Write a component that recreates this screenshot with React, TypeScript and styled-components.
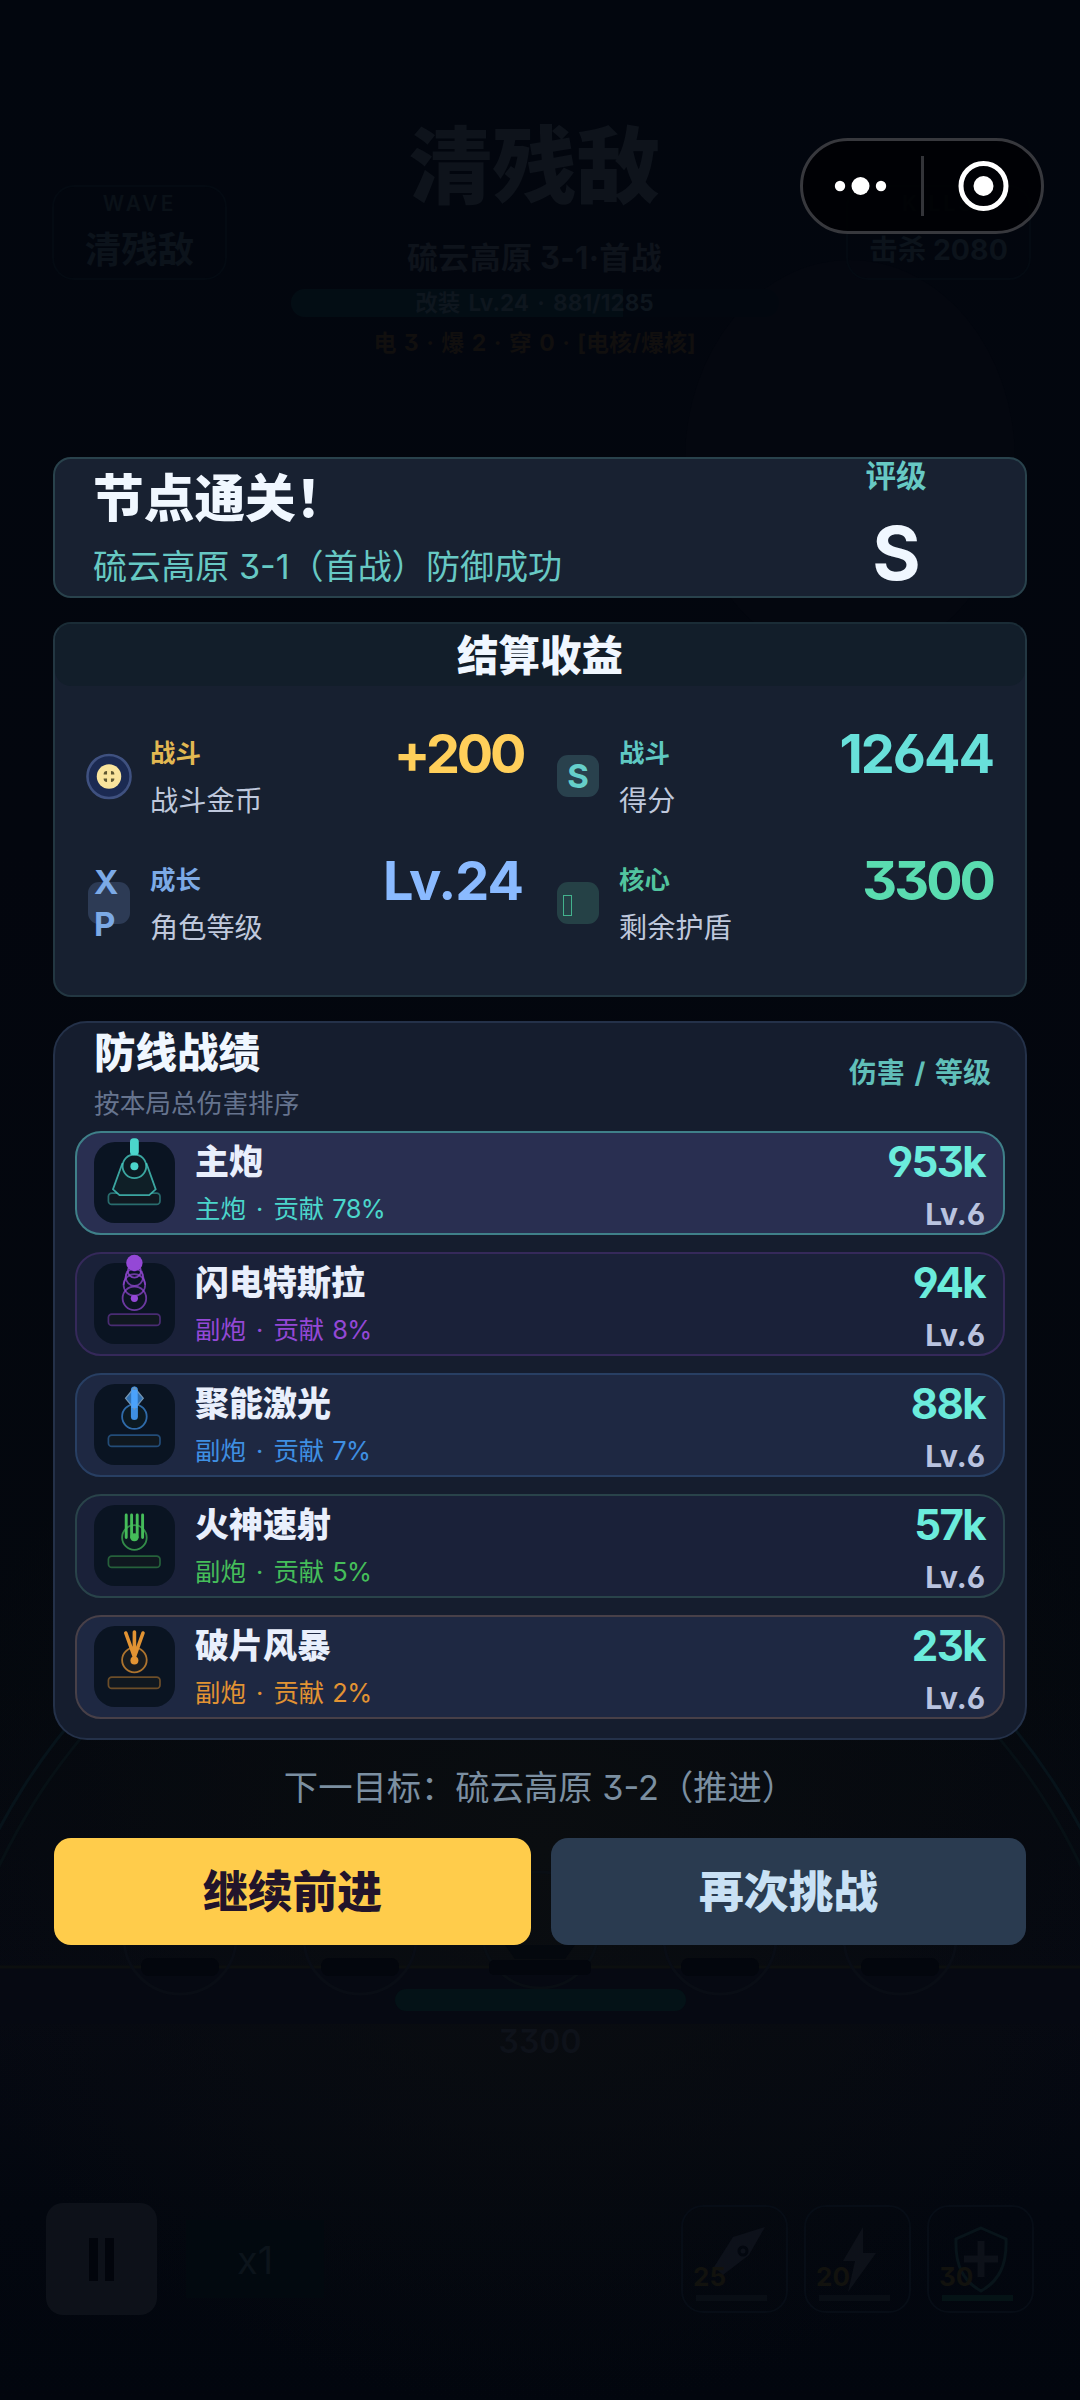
import React from "react";
import styled, { createGlobalStyle } from "styled-components";

const Global = createGlobalStyle`
  *, *::before, *::after { box-sizing: border-box; }
  body {
    margin: 0;
    background: #03070f;
    font-family: Inter, "Noto Sans CJK SC", sans-serif;
    font-feature-settings: "cv03", "cv04", "cv09";
  }
`;

const Page = styled.div`
  position: relative;
  width: 1080px;
  height: 2400px;
  overflow: hidden;
  background:
    radial-gradient(ellipse 620px 560px at 50% 1850px, #0a0d10 0%, rgba(10, 13, 16, 0) 100%),
    linear-gradient(180deg, #02060e 0%, #03060e 35%, #04080e 70%, #060912 84%, #03070f 92%, #02060e 100%);
`;

/* Dimmed battle scene under the result sheet */
const Scene = styled.div`
  position: absolute;
  inset: 0;
  display: flex;
  flex-direction: column;
  white-space: nowrap;
`;

const Field = styled.svg`
  position: absolute;
  inset: 0;
`;

const Hud = styled.div`
  position: relative;
  height: 370px;
  padding: 112px 49px 0 52px;
  display: grid;
  grid-template-columns: 175px 1fr 185px;
  align-items: start;
`;

const HudCard = styled.div`
  margin-top: 73px;
  height: 95px;
  border: 2px solid #040a12;
  border-radius: 22px;
  display: flex;
  flex-direction: column;
  align-items: center;
  color: #0c131b;
`;

const HudCaption = styled.span`
  font-size: 21px;
  line-height: 34px;
  font-weight: 600;
  letter-spacing: 3px;
  color: #0a1118;
`;

const HudValue = styled.span<{ $size: number }>`
  margin-top: 9px;
  font-size: ${(p) => p.$size}px;
  line-height: 40px;
  font-weight: 700;
`;

const HudCenter = styled.div`
  display: flex;
  flex-direction: column;
  align-items: center;
  padding-right: 4px;
  color: #0e131b;
  font-weight: 700;
`;

const WaveTitle = styled.div`
  font-size: 84px;
  line-height: 110px;
  font-weight: 900;
`;

const WaveSub = styled.div`
  margin-top: 16px;
  font-size: 31px;
  line-height: 40px;
  letter-spacing: 0.3px;
`;

const XpBar = styled.div`
  margin-top: 11px;
  width: 488px;
  height: 28px;
  border-radius: 14px;
  text-align: center;
  font-size: 22.5px;
  line-height: 28px;
  word-spacing: 3px;
  color: #0e161e;
  background: linear-gradient(90deg, #030d14 0 68%, #02070f 68%);
`;

const Cores = styled.div`
  margin-top: 10px;
  font-size: 23px;
  line-height: 32px;
  word-spacing: 2px;
  color: #110f0e;
`;

const CoreHp = styled.div`
  position: relative;
  margin: 1619px auto 0;
  display: flex;
  flex-direction: column;
  align-items: center;
  color: #0e121a;
  font-size: 32px;
  font-weight: 600;
  line-height: 40px;
`;

const HpBar = styled.div`
  width: 291px;
  height: 22px;
  margin-bottom: 11px;
  border-radius: 11px;
  background: #041217;
`;

const Controls = styled.div`
  position: relative;
  margin-top: 141px;
  padding: 0 46px;
  display: flex;
  align-items: center;
`;

const Pause = styled.div`
  width: 111px;
  height: 112px;
  border-radius: 17px;
  background: #0d1119;
  display: flex;
  align-items: center;
  justify-content: center;
  gap: 7px;
`;

const PauseBar = styled.i`
  width: 9px;
  height: 43px;
  background: #02050c;
`;

const Speed = styled.div`
  margin-left: 29px;
  width: 138px;
  height: 78px;
  line-height: 80px;
  text-align: center;
  font-size: 38px;
  color: #0c141b;
  background: #02090f;
`;

const Skills = styled.div`
  margin-left: auto;
  display: flex;
  gap: 16px;
`;

const Skill = styled.div`
  position: relative;
  width: 107px;
  height: 108px;
  border: 2px solid #070d16;
  border-radius: 22px;
`;

const SkillArt = styled.svg`
  position: absolute;
  left: -2px;
  top: -2px;
`;

const SkillCost = styled.span`
  position: absolute;
  left: 10px;
  bottom: 20px;
  font-size: 26px;
  line-height: 28px;
  font-weight: 700;
  color: #12120e;
`;

/* Host app capsule */
const Capsule = styled.div`
  position: absolute;
  left: 800px;
  top: 138px;
  width: 244px;
  height: 96px;
  border: 3px solid #37383d;
  border-radius: 48px;
  background: rgba(0, 1, 4, 0.85);
  display: flex;
  align-items: center;
`;

/* Result sheet */
const Sheet = styled.main`
  position: relative;
  padding: 457px 53px 0;
  display: flex;
  flex-direction: column;
  white-space: nowrap;
`;

const Banner = styled.section`
  height: 141px;
  border: 2px solid #29424c;
  border-radius: 18px;
  background: #182131;
  padding: 0 74px 0 38px;
  display: flex;
  justify-content: space-between;
`;

const BannerTitle = styled.h1`
  margin: 10px 0 18px;
  font-size: 50.7px;
  line-height: 60px;
  font-weight: 900;
  color: #f0f7ff;
`;

const BannerSub = styled.div`
  font-size: 34.1px;
  line-height: 40px;
  color: #67c9c4;
`;

const Rating = styled.div`
  width: 110px;
  text-align: center;
`;

const RatingLabel = styled.div`
  margin-top: -1px;
  font-size: 30.5px;
  line-height: 36px;
  font-weight: 700;
  color: #67c9c4;
`;

const RatingGrade = styled.div`
  margin-top: 19px;
  font-size: 74px;
  line-height: 80px;
  font-weight: 750;
  letter-spacing: -1px;
  color: #f0f7ff;
`;

const Rewards = styled.section`
  margin-top: 24px;
  height: 375px;
  border: 2px solid #233742;
  border-top-color: #1a2c36;
  border-radius: 18px;
  background: #172030;
`;

const RewardsHead = styled.h2`
  margin: 0;
  height: 62px;
  padding-top: 7px;
  border-radius: 16px;
  background: #121e2a;
  text-align: center;
  font-size: 41.5px;
  line-height: 50px;
  font-weight: 900;
  color: #f0f7ff;
`;

const RewardGrid = styled.div`
  padding: 42px 32px 0 31px;
  display: grid;
  grid-template-columns: 437px 438px;
  grid-auto-rows: 97px;
  gap: 30px 32px;
`;

const Reward = styled.div`
  display: flex;
  align-items: flex-start;
`;

const IconSlot = styled.div`
  width: 46px;
  height: 46px;
  margin: 25px 18px 0 0;
  display: flex;
  align-items: center;
  justify-content: center;
`;

const Badge = styled.div<{ $bg: string; $fg: string; $left?: boolean }>`
  width: 42px;
  height: 42px;
  padding: ${(p) => (p.$left ? "0 6px" : "0")};
  border-radius: 11px;
  background: ${(p) => p.$bg};
  color: ${(p) => p.$fg};
  display: flex;
  align-items: center;
  justify-content: ${(p) => (p.$left ? "flex-start" : "center")};
  font-size: 33px;
  line-height: 42px;
  font-weight: 700;
  white-space: normal;
  word-break: break-all;
`;

const MissingGlyph = styled.i`
  width: 9px;
  height: 21px;
  margin-top: 4px;
  border: 1.5px solid #43b28d;
`;

const RewardText = styled.div`
  flex: 1;
  padding-top: 9px;
`;

const RewardTag = styled.div<{ $fg: string }>`
  font-size: 25.5px;
  line-height: 32px;
  font-weight: 700;
  color: ${(p) => p.$fg};
`;

const RewardName = styled.div`
  margin-top: 14px;
  font-size: 28.2px;
  line-height: 36px;
  color: #bfc8dc;
`;

const RewardValue = styled.div<{ $fg: string; $ls: number }>`
  font-size: 54px;
  line-height: 51px;
  font-weight: 750;
  letter-spacing: ${(p) => p.$ls}px;
  color: ${(p) => p.$fg};
`;

const Ranking = styled.section`
  margin-top: 24px;
  height: 719px;
  border: 2px solid #243149;
  border-radius: 34px;
  background: #151d2e;
  padding: 0 20px;
`;

const RankHead = styled.div`
  height: 108px;
  padding: 4px 14px 0 19px;
  display: flex;
  justify-content: space-between;
`;

const RankTitle = styled.h2`
  margin: 0;
  font-size: 41.5px;
  line-height: 53px;
  font-weight: 900;
  color: #f0f7ff;
`;

const RankNote = styled.div`
  margin-top: 8px;
  font-size: 25.7px;
  line-height: 32px;
  color: #66748e;
`;

const RankLegend = styled.div`
  padding-top: 28px;
  font-size: 28px;
  line-height: 36px;
  font-weight: 700;
  word-spacing: 3px;
  color: #60bfb9;
`;

const RankList = styled.div`
  display: flex;
  flex-direction: column;
  gap: 17px;
`;

const Row = styled.div<{ $bg: string; $line: string }>`
  height: 104px;
  padding: 0 18px 0 17px;
  border: 2px solid ${(p) => p.$line};
  border-radius: 26px;
  background: ${(p) => p.$bg};
  display: flex;
`;

const Tile = styled.div`
  width: 81px;
  height: 81px;
  margin: 9px 20px 0 0;
  border-radius: 21px;
  background: #0a1422;
`;

const TurretArt = styled.svg`
  display: block;
  overflow: visible;
`;

const RowText = styled.div`
  flex: 1;
  padding-top: 7px;
`;

const RowName = styled.div`
  font-size: 34px;
  line-height: 44px;
  font-weight: 900;
  color: #e9effc;
`;

const RowNote = styled.div<{ $fg: string }>`
  margin-top: 9px;
  font-size: 25.4px;
  line-height: 32px;
  word-spacing: 1px;
  color: ${(p) => p.$fg};
`;

const Dot = styled.span`
  margin: 0 2px;
`;

const Percent = styled.span`
  letter-spacing: -0.7px;
`;

const RowScore = styled.div`
  padding-top: 7px;
  text-align: right;
`;

const Damage = styled.div`
  font-size: 42px;
  line-height: 44px;
  font-weight: 750;
  letter-spacing: -1.6px;
  color: #6becdc;
`;

const Level = styled.div`
  margin-top: 12px;
  font-size: 30px;
  line-height: 36px;
  font-weight: 700;
  letter-spacing: -0.1px;
  color: #b9c3df;
`;

const NextGoal = styled.div`
  margin-top: 27px;
  text-align: center;
  font-size: 34.3px;
  line-height: 42px;
  color: #7b8fa1;
`;

const Actions = styled.div`
  margin: 29px 1px 0;
  display: grid;
  grid-template-columns: 477px 1fr;
  gap: 20px;
`;

const Action = styled.button<{ $primary?: boolean }>`
  height: 107px;
  padding: 1px 0 0;
  border: 0;
  border-radius: 17px;
  font: 900 44.8px/106px Inter, "Noto Sans CJK SC", sans-serif;
  background: ${(p) => (p.$primary ? "#ffcc4b" : "#2a3b50")};
  color: ${(p) => (p.$primary ? "#22142b" : "#c9e1f5")};
`;

type Kind = "main" | "tesla" | "laser" | "vulcan" | "shard";

const barrels: Record<Kind, (c: string) => React.ReactNode> = {
  main: (c) => (
    <>
      <path d="M28.5 21 19 47.3 25.5 53.2H55.2L61.7 47.3 52.3 21" fill="#0f1f27" stroke={c} strokeOpacity=".75" strokeWidth="1.8" />
      <circle cx="40.4" cy="24.3" r="11.8" fill="#0c1a22" stroke={c} strokeOpacity=".75" strokeWidth="1.8" />
      <circle cx="40.4" cy="24.3" r="4" fill={c} />
      <rect x="36" y="-3.7" width="8.8" height="17" rx="3.6" fill={c} />
    </>
  ),
  tesla: (c) => (
    <>
      <circle cx="40.4" cy="35.3" r="11.8" fill="#0c1522" stroke={c} strokeOpacity=".7" strokeWidth="1.8" />
      <path d="M33 8 29.5 22M47.8 8 51.3 22" stroke={c} strokeOpacity=".6" strokeWidth="1.6" />
      <circle cx="40.4" cy="22" r="10.8" fill="none" stroke={c} strokeOpacity=".7" strokeWidth="1.7" />
      <circle cx="40.4" cy="14.2" r="8.6" fill="none" stroke={c} strokeOpacity=".7" strokeWidth="1.7" />
      <circle cx="40.4" cy="8" r="6.6" fill="none" stroke={c} strokeOpacity=".8" strokeWidth="1.7" />
      <circle cx="40.4" cy="0" r="8.2" fill={c} />
      <circle cx="40.4" cy="35.3" r="3.6" fill={c} />
    </>
  ),
  laser: (c) => (
    <>
      <circle cx="40.4" cy="32.6" r="12.3" fill="#0c1a22" stroke={c} strokeOpacity=".7" strokeWidth="1.8" />
      <path d="M40.4 6V32.6" stroke={c} strokeWidth="7" strokeLinecap="round" />
      <path d="M40.4 3.5 49.3 14.3 40.4 25 31.5 14.3Z" fill={c} fillOpacity=".75" stroke="#7396b5" strokeWidth="1.2" />
      <path d="M40.4 6V24" stroke="#4ba2fb" strokeWidth="6" />
    </>
  ),
  vulcan: (c) => (
    <>
      <circle cx="40.4" cy="32.5" r="12.3" fill="#0c1a22" stroke={c} strokeOpacity=".7" strokeWidth="1.8" />
      <circle cx="40.4" cy="32.2" r="4" fill={c} />
      <path d="M32.2 10V32.5M37.6 10V32.5M43.2 10V32.5M48.6 10V32.5" stroke={c} strokeWidth="2.9" strokeLinecap="round" />
    </>
  ),
  shard: (c) => (
    <>
      <circle cx="40.4" cy="34" r="12.3" fill="#171b20" stroke={c} strokeOpacity=".75" strokeWidth="1.8" />
      <circle cx="40.4" cy="34.4" r="4" fill={c} />
      <path d="M40.4 31 31.8 7M40.4 31V6M40.4 31 49 7" stroke={c} strokeWidth="3.6" strokeLinecap="round" />
    </>
  ),
};

const Turret = ({ kind, color }: { kind: Kind; color: string }) => (
  <TurretArt width="81" height="81" viewBox="0 0 81 81" fill="none">
    <rect x="14.4" y="51.2" width="51.6" height="11.2" rx="3.4" fill="#101820" stroke={color} strokeOpacity=".45" strokeWidth="1.7" />
    {barrels[kind](color)}
  </TurretArt>
);

const ROWS: { kind: Kind; name: string; role: string; pct: string; dmg: string; color: string; bg: string; line: string }[] = [
  { kind: "main", name: "主炮", role: "主炮", pct: "78%", dmg: "953k", color: "#4bd6cb", bg: "#292f51", line: "#3f8089" },
  { kind: "tesla", name: "闪电特斯拉", role: "副炮", pct: "8%", dmg: "94k", color: "#9448d6", bg: "#1a2139", line: "#35295a" },
  { kind: "laser", name: "聚能激光", role: "副炮", pct: "7%", dmg: "88k", color: "#3e8fe2", bg: "#1e2842", line: "#283f63" },
  { kind: "vulcan", name: "火神速射", role: "副炮", pct: "5%", dmg: "57k", color: "#45bd5a", bg: "#1a2139", line: "#29434a" },
  { kind: "shard", name: "破片风暴", role: "副炮", pct: "2%", dmg: "23k", color: "#e29333", bg: "#1e2842", line: "#484048" },
];

const Coin = () => (
  <svg width="47" height="47" viewBox="0 0 47 47">
    <circle cx="23.5" cy="23.5" r="22" fill="#1b2a52" stroke="#3f5180" strokeWidth="2.6" />
    <circle cx="23.5" cy="23.5" r="12.5" fill="#f9e49d" />
    <path
      d="M18 21.5a3.5 3.5 0 0 1 3.5-3.5v3.5zM29 21.5a3.5 3.5 0 0 0-3.5-3.5v3.5zM18 25.5a3.5 3.5 0 0 0 3.5 3.5v-3.5zM29 25.5a3.5 3.5 0 0 1-3.5 3.5v-3.5z"
      fill="#5d5632"
    />
  </svg>
);

const Battlefield = () => (
  <Field width="1080" height="2400" fill="none">
    <ellipse cx="850" cy="460" rx="165" ry="200" fill="#04070f" />
    <rect y="1968" width="1080" height="56" fill="#060912" />
    <path d="M-54 1968A612 612 0 0 1 1134 1968" stroke="#07131a" strokeWidth="3" />
    <path d="M-38 1968A598 598 0 0 1 1118 1968" stroke="#071015" strokeWidth="3" />
    <path d="M0 1967H1080" stroke="#0c0f0f" strokeWidth="3" />
    {[180, 360, 720, 900].map((x) => (
      <g key={x}>
        <circle cx={x} cy="1938" r="56" stroke="#090d15" strokeWidth="3" />
        <rect x={x - 39} y="1958" width="78" height="18" rx="8" fill="#03060d" />
      </g>
    ))}
    <circle cx="540" cy="1930" r="58" stroke="#090e14" strokeWidth="3" />
    <rect x="489" y="1960" width="102" height="15" rx="5" fill="#03060d" />
    <path d="M505 1945l10 14h50l10-14" fill="#04080e" />
  </Field>
);

export default function App() {
  return (
    <Page>
      <Global />
      <Scene>
        <Battlefield />
        <Hud>
          <HudCard>
            <HudCaption>WAVE</HudCaption>
            <HudValue $size={36.5}>清残敌</HudValue>
          </HudCard>
          <HudCenter>
            <WaveTitle>清残敌</WaveTitle>
            <WaveSub>硫云高原 3-1·首战</WaveSub>
            <XpBar>改装 Lv.24 · 881/1285</XpBar>
            <Cores>电 3 · 爆 2 · 穿 0 · [电核/爆核]</Cores>
          </HudCenter>
          <HudCard>
            <HudCaption>KILLS</HudCaption>
            <HudValue $size={28.5}>击杀 2080</HudValue>
          </HudCard>
        </Hud>
        <CoreHp>
          <HpBar />
          3300
        </CoreHp>
        <Controls>
          <Pause>
            <PauseBar />
            <PauseBar />
          </Pause>
          <Speed>x1</Speed>
          <Skills>
            <Skill>
              <SkillArt width="107" height="108">
                <path d="M84 22 52 32 33 62 42 70 68 50Z" fill="#0d111a" />
                <circle cx="62" cy="46" r="4" fill="none" stroke="#03070f" strokeWidth="3" />
                <path d="M15 93H86" stroke="#090e15" strokeWidth="6" />
              </SkillArt>
              <SkillCost>25</SkillCost>
            </Skill>
            <Skill>
              <SkillArt width="107" height="108">
                <path d="M59 22 39 56H51L44 87 72 48H59Z" fill="#0d1119" />
                <path d="M15 93H86" stroke="#090e15" strokeWidth="6" />
              </SkillArt>
              <SkillCost>20</SkillCost>
            </Skill>
            <Skill>
              <SkillArt width="107" height="108" fill="none">
                <path d="M54 23 79 34C80 60 72 76 54 86 36 76 28 60 29 34Z" stroke="#08141a" strokeWidth="3" />
                <path d="M54 36V72M37 54H71" stroke="#0d1119" strokeWidth="7" />
                <path d="M15 93H86" stroke="#051316" strokeWidth="6" />
              </SkillArt>
              <SkillCost>30</SkillCost>
            </Skill>
          </Skills>
        </Controls>
      </Scene>

      <Capsule>
        <svg width="238" height="90" viewBox="0 0 238 90" fill="#fff">
          <circle cx="37" cy="45" r="5.2" />
          <circle cx="57.5" cy="45" r="9" />
          <circle cx="78" cy="45" r="5.2" />
          <rect x="118" y="15" width="3" height="60" fill="#333439" />
          <circle cx="180.5" cy="45" r="22.5" fill="none" stroke="#fff" strokeWidth="5" />
          <circle cx="180.5" cy="45" r="10" />
        </svg>
      </Capsule>

      <Sheet>
        <Banner>
          <div>
            <BannerTitle>节点通关！</BannerTitle>
            <BannerSub>硫云高原 3-1（首战）防御成功</BannerSub>
          </div>
          <Rating>
            <RatingLabel>评级</RatingLabel>
            <RatingGrade>S</RatingGrade>
          </Rating>
        </Banner>

        <Rewards>
          <RewardsHead>结算收益</RewardsHead>
          <RewardGrid>
            <Reward>
              <IconSlot><Coin /></IconSlot>
              <RewardText>
                <RewardTag $fg="#e2b852">战斗</RewardTag>
                <RewardName>战斗金币</RewardName>
              </RewardText>
              <RewardValue $fg="#ffcf5a" $ls={-3.3}>+200</RewardValue>
            </Reward>
            <Reward>
              <IconSlot><Badge $bg="#29414d" $fg="#66cfca">S</Badge></IconSlot>
              <RewardText>
                <RewardTag $fg="#5fc8c2">战斗</RewardTag>
                <RewardName>得分</RewardName>
              </RewardText>
              <RewardValue $fg="#68e0da" $ls={-2}>12644</RewardValue>
            </Reward>
            <Reward>
              <IconSlot><Badge $bg="#2d3b55" $fg="#7caae6" $left>XP</Badge></IconSlot>
              <RewardText>
                <RewardTag $fg="#7caae6">成长</RewardTag>
                <RewardName>角色等级</RewardName>
              </RewardText>
              <RewardValue $fg="#8abaff" $ls={-1}>Lv.24</RewardValue>
            </Reward>
            <Reward>
              <IconSlot><Badge $bg="#254146" $fg="#43b28d" $left><MissingGlyph /></Badge></IconSlot>
              <RewardText>
                <RewardTag $fg="#52c49f">核心</RewardTag>
                <RewardName>剩余护盾</RewardName>
              </RewardText>
              <RewardValue $fg="#5adcb0" $ls={-3}>3300</RewardValue>
            </Reward>
          </RewardGrid>
        </Rewards>

        <Ranking>
          <RankHead>
            <div>
              <RankTitle>防线战绩</RankTitle>
              <RankNote>按本局总伤害排序</RankNote>
            </div>
            <RankLegend>伤害 / 等级</RankLegend>
          </RankHead>
          <RankList>
            {ROWS.map((r) => (
              <Row key={r.kind} $bg={r.bg} $line={r.line}>
                <Tile><Turret kind={r.kind} color={r.color} /></Tile>
                <RowText>
                  <RowName>{r.name}</RowName>
                  <RowNote $fg={r.color}>
                    {r.role} <Dot>·</Dot> 贡献 <Percent>{r.pct}</Percent>
                  </RowNote>
                </RowText>
                <RowScore>
                  <Damage>{r.dmg}</Damage>
                  <Level>Lv.6</Level>
                </RowScore>
              </Row>
            ))}
          </RankList>
        </Ranking>

        <NextGoal>下一目标：硫云高原 3-2（推进）</NextGoal>
        <Actions>
          <Action $primary>继续前进</Action>
          <Action>再次挑战</Action>
        </Actions>
      </Sheet>
    </Page>
  );
}
